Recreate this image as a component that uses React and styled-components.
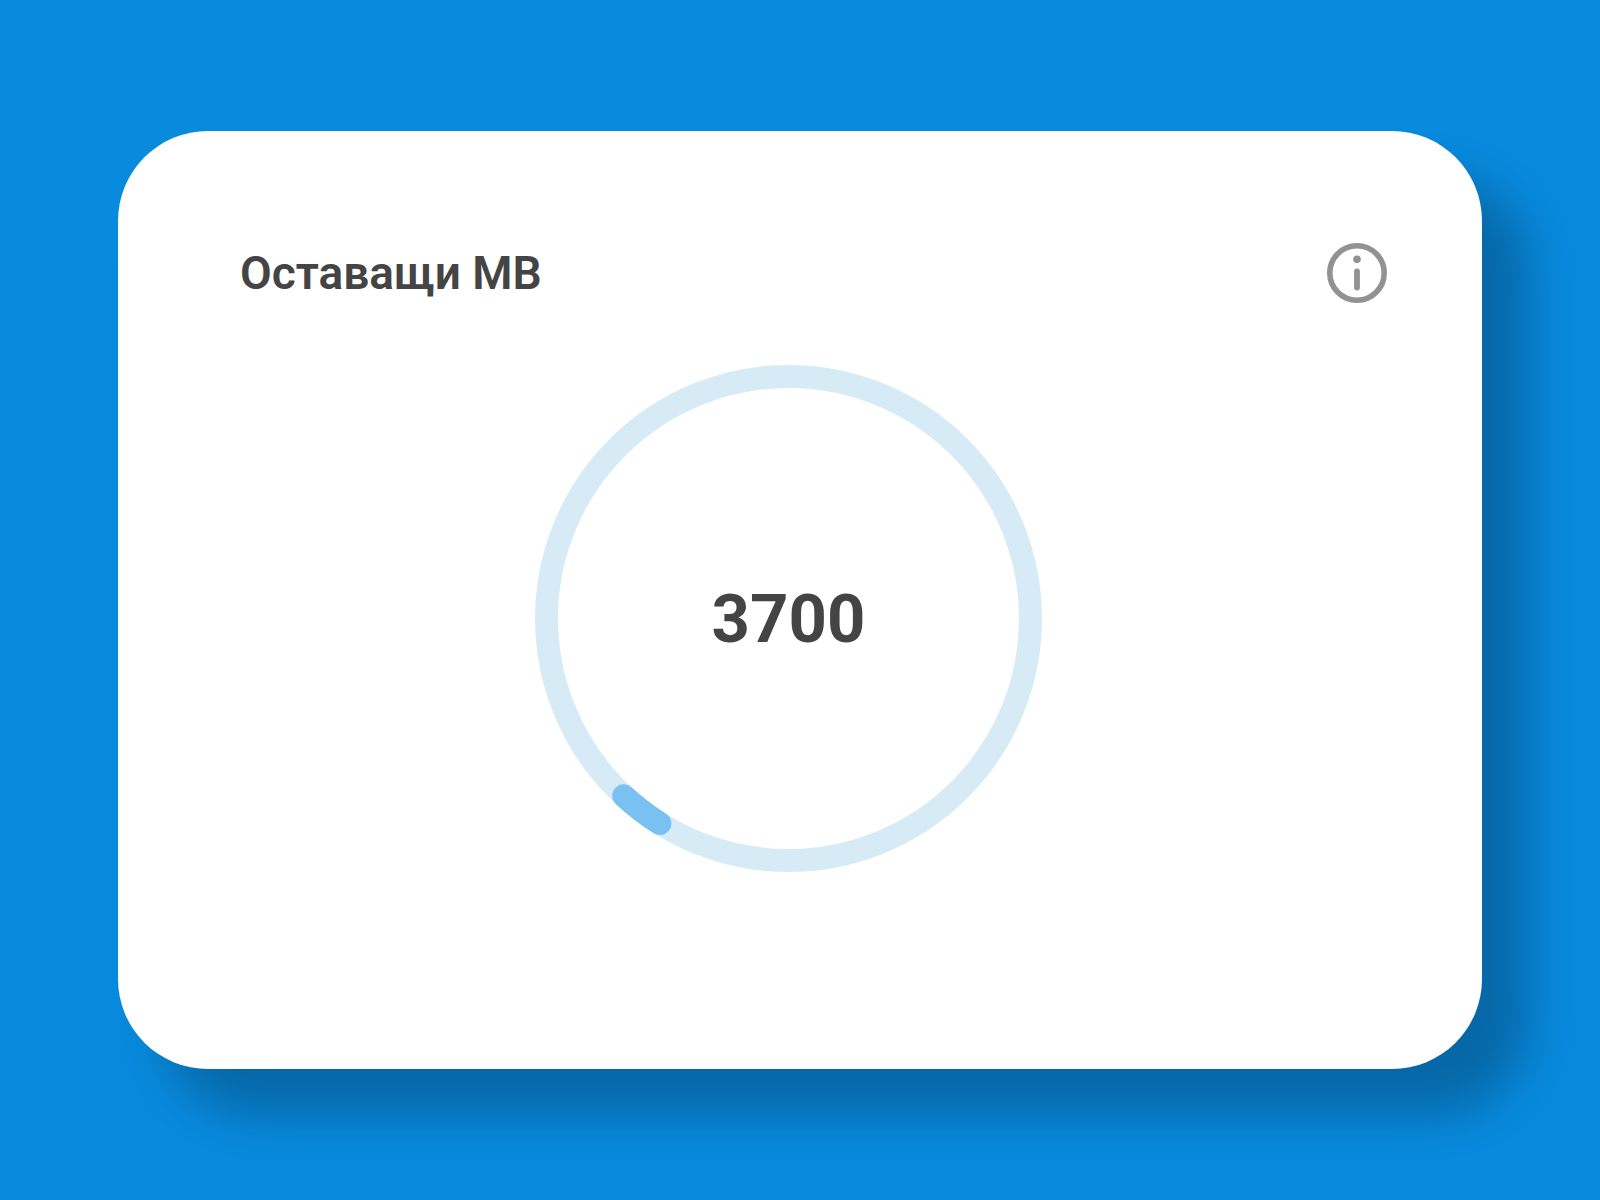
import React from "react";
import styled, { createGlobalStyle } from "styled-components";

const GlobalStyle = createGlobalStyle`
  * {
    box-sizing: border-box;
  }

  body {
    margin: 0;
    background: #088ade;
    color: #444;
    font-family: Roboto, "Noto Sans", sans-serif;
  }
`;

const Page = styled.main`
  display: flex;
  align-items: center;
  min-height: 100vh;
  padding: 48px 118px;
`;

const Card = styled.section`
  flex: 1;
  padding: 112px 95px 197px 72px;
  border-radius: 90px;
  background: #fff;
  box-shadow: 46px 46px 50px rgba(0, 0, 0, 0.25);
`;

const Header = styled.header`
  display: flex;
  align-items: center;
  justify-content: space-between;
  padding-left: 50px;
`;

const Title = styled.h1`
  margin: 0;
  font-size: 46px;
  font-weight: 600;
  line-height: 60px;
`;

const InfoButton = styled.button`
  display: flex;
  padding: 0;
  border: 0;
  background: none;
  color: #929292;
  cursor: pointer;
`;

const Gauge = styled.div`
  display: grid;
  place-items: center;
  margin-top: 62px;

  > * {
    grid-area: 1 / 1;
  }
`;

const Value = styled.span`
  font-size: 67px;
  font-weight: 700;
  line-height: 80px;
`;

function InfoIcon() {
  return (
    <svg width="60" height="60" viewBox="0 0 60 60" fill="none" aria-hidden="true">
      <circle cx="30" cy="30" r="27.2" stroke="currentColor" strokeWidth="5.6" />
      <circle cx="30" cy="16.3" r="3.8" fill="currentColor" />
      <path d="M30 28.5v16" stroke="currentColor" strokeWidth="5.8" strokeLinecap="round" />
    </svg>
  );
}

function Ring({ percent }) {
  return (
    <svg width="507" height="507" viewBox="0 0 507 507" fill="none" aria-hidden="true">
      <circle cx="253.5" cy="253.5" r="242" stroke="#d7ebf7" strokeWidth="23" />
      <circle
        cx="253.5"
        cy="253.5"
        r="242"
        stroke="#79c1f1"
        strokeWidth="23"
        strokeLinecap="round"
        pathLength="100"
        strokeDasharray={`${percent} ${100 - percent}`}
        transform="rotate(122.1 253.5 253.5)"
      />
    </svg>
  );
}

function App() {
  return (
    <>
      <GlobalStyle />
      <Page lang="bg">
        <Card>
          <Header>
            <Title>Оставащи MB</Title>
            <InfoButton type="button" aria-label="Информация">
              <InfoIcon />
            </InfoButton>
          </Header>

          <Gauge>
            <Ring percent={3} />
            <Value>3700</Value>
          </Gauge>
        </Card>
      </Page>
    </>
  );
}

export default App;
